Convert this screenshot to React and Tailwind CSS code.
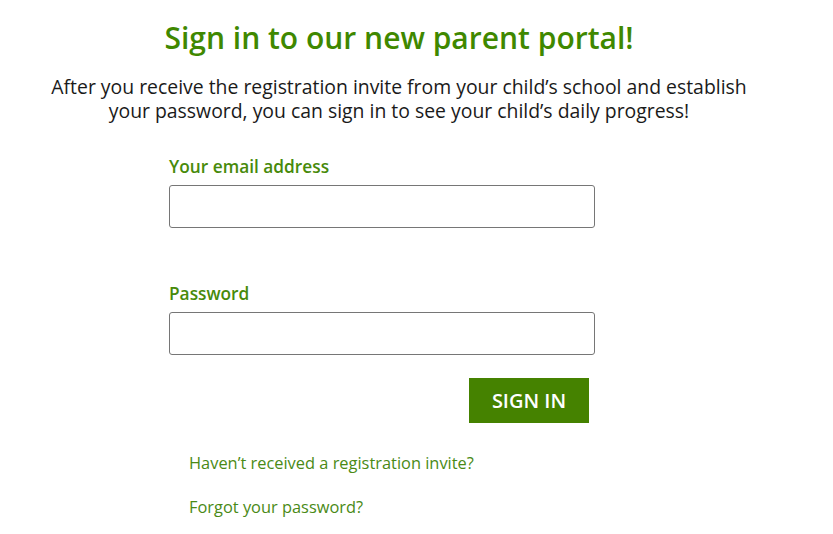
import React from 'react';

export default function App() {
    return (
        <div className="w-[833px] h-[534px] bg-white overflow-hidden" style={{ fontFamily: '"Open Sans", sans-serif' }}>
            <div className="w-[798px] flex flex-col items-center">
                <h1 className="mt-[16px] text-[30px] leading-[44px] font-semibold text-[#3f8800]">
                    Sign in to our new parent portal!
                </h1>
                <p className="mt-[15px] text-center text-[19.4px] leading-[24px] text-[#1a1a1a]">
                    After you receive the registration invite from your child’s school and establish<br />
                    your password, you can sign in to see your child’s daily progress!
                </p>
            </div>

            <form className="ml-[169px] w-[426px] mt-[32px]" onSubmit={e => e.preventDefault()}>
                <label className="block text-[17.3px] leading-[24px] font-semibold text-[#478a0a]">Your email address</label>
                <input type="email" className="mt-[6px] block w-[426px] h-[43px] border border-[#767676] rounded-[3px] bg-white outline-none" />

                <label className="block mt-[54px] text-[17.3px] leading-[24px] font-semibold text-[#478a0a]">Password</label>
                <input type="password" className="mt-[6px] block w-[426px] h-[43px] border border-[#767676] rounded-[3px] bg-white outline-none" />

                <div className="flex justify-end mt-[23px] pr-[6px]">
                    <button type="submit" className="w-[120px] h-[45px] bg-[#458200] text-white text-[20px] font-semibold">
                        SIGN IN
                    </button>
                </div>

                <div className="ml-[20px] mt-[29px] flex flex-col gap-[22px]">
                    <a href="#" className="text-[16.4px] leading-[22px] text-[#4a8a16]">Haven’t received a registration invite?</a>
                    <a href="#" className="text-[16.4px] leading-[22px] text-[#4a8a16]">Forgot your password?</a>
                </div>
            </form>
        </div>
    );
}
